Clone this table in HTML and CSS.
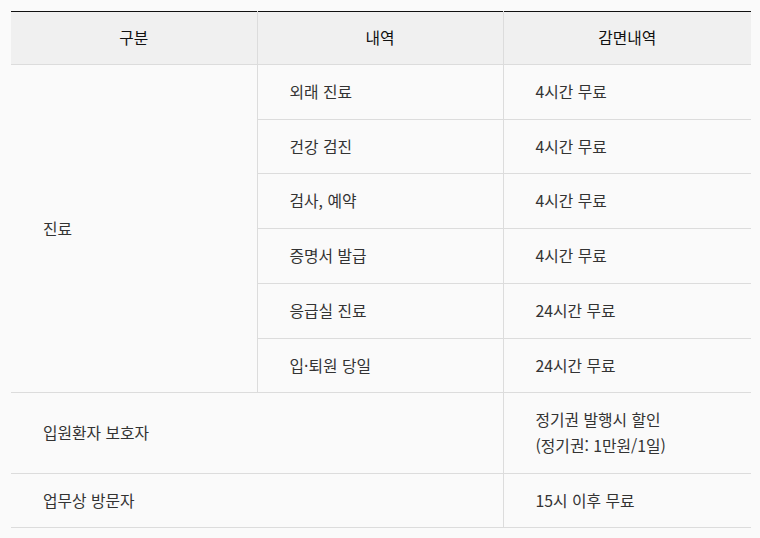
FILE: index.html
```html
<!DOCTYPE html>
<html lang="ko">
<head>
<meta charset="utf-8">
<link rel="stylesheet" href="styles.css">
</head>
<body>
<div class="wrap">
<table class="fee">
  <colgroup><col class="c1"><col class="c2"><col class="c3"></colgroup>
  <thead>
    <tr><th>구분</th><th>내역</th><th>감면내역</th></tr>
  </thead>
  <tbody>
    <tr><td rowspan="6">진료</td><td class="bl">외래 진료</td><td class="bl">4시간 무료</td></tr>
    <tr><td class="bl">건강 검진</td><td class="bl">4시간 무료</td></tr>
    <tr><td class="bl">검사, 예약</td><td class="bl">4시간 무료</td></tr>
    <tr><td class="bl">증명서 발급</td><td class="bl">4시간 무료</td></tr>
    <tr><td class="bl">응급실 진료</td><td class="bl">24시간 무료</td></tr>
    <tr><td class="bl">입·퇴원 당일</td><td class="bl">24시간 무료</td></tr>
    <tr><td colspan="2">입원환자 보호자</td><td class="bl">정기권 발행시 할인<br>(정기권: 1만원/1일)</td></tr>
    <tr><td colspan="2">업무상 방문자</td><td class="bl">15시 이후 무료</td></tr>
  </tbody>
</table>
</div>
</body>
</html>
```

FILE: styles.css
```css
html, body {
  margin: 0;
  background: #fafafa;
}
.wrap {
  padding: 11px 9px 11px 11px;
}
.fee {
  width: 740px;
  border-collapse: collapse;
  table-layout: fixed;
  font-family: "Noto Sans CJK KR", "Noto Sans", sans-serif;
  font-size: 15.8px;
  line-height: 25.7px;
  color: #333;
  border-top: 1px solid #111;
}
.c1 { width: 246px; }
.c2 { width: 246px; }
.c3 { width: 248px; }
.fee th {
  background: #f0f0f0;
  color: #111;
  font-weight: 400;
  text-align: center;
  height: 52px;
  padding: 0;
  border-bottom: 1px solid #dcdcdc;
  border-left: 1px solid #dcdcdc;
}
.fee th:first-child { border-left: 0; }
.fee td {
  text-align: left;
  padding: 14px 32px;
  border-bottom: 1px solid #dcdcdc;
  vertical-align: middle;
}
.fee td.bl {
  border-left: 1px solid #dcdcdc;
}
```
